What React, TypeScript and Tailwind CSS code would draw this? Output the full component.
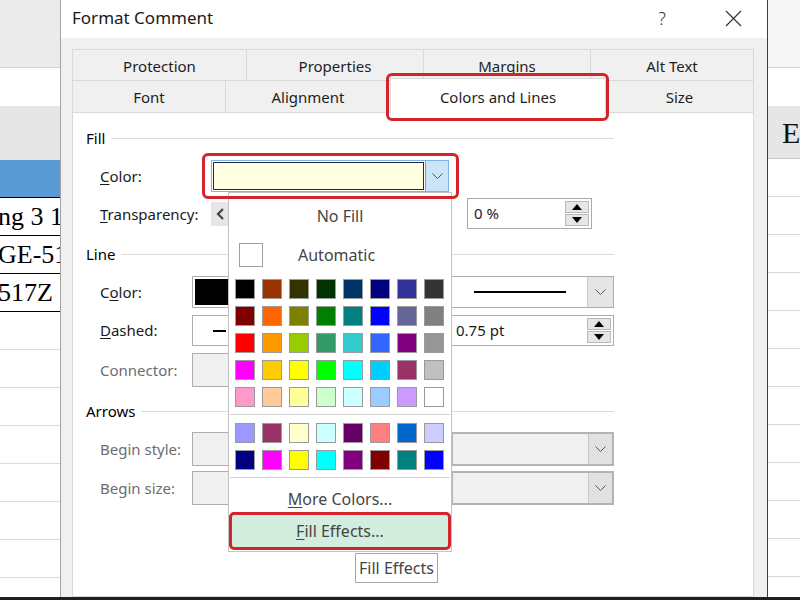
import React from "react";

const palette = [
  ["#000000", "#993300", "#333300", "#003300", "#003366", "#000080", "#333399", "#333333"],
  ["#800000", "#FF6600", "#808000", "#008000", "#008080", "#0000FF", "#666699", "#808080"],
  ["#FF0000", "#FF9900", "#99CC00", "#339966", "#33CCCC", "#3366FF", "#800080", "#969696"],
  ["#FF00FF", "#FFCC00", "#FFFF00", "#00FF00", "#00FFFF", "#00CCFF", "#993366", "#C0C0C0"],
  ["#FF99CC", "#FFCC99", "#FFFF99", "#CCFFCC", "#CCFFFF", "#99CCFF", "#CC99FF", "#FFFFFF"],
];

const chartColors = [
  ["#9999FF", "#993366", "#FFFFCC", "#CCFFFF", "#660066", "#FF8080", "#0066CC", "#CCCCFF"],
  ["#000080", "#FF00FF", "#FFFF00", "#00FFFF", "#800080", "#800000", "#008080", "#0000FF"],
];

function Chevron() {
  return (
    <svg width="11" height="6" viewBox="0 0 11 6">
      <path d="M0.5 0.5 L5.5 5.5 L10.5 0.5" fill="none" stroke="#555" strokeWidth="1" />
    </svg>
  );
}

function Spin() {
  return (
    <div className="flex flex-col w-[26px] h-full py-[2px] pr-[2px] gap-[1px]">
      <div className="flex-1 bg-[#e6e6e6] border border-[#b9b9b9] flex items-center justify-center">
        <svg width="10" height="6" viewBox="0 0 10 6">
          <path d="M0 6 L5 0 L10 6Z" fill="#000" />
        </svg>
      </div>
      <div className="flex-1 bg-[#e6e6e6] border border-[#b9b9b9] flex items-center justify-center">
        <svg width="10" height="6" viewBox="0 0 10 6">
          <path d="M0 0 L5 6 L10 0Z" fill="#000" />
        </svg>
      </div>
    </div>
  );
}

function SectionHeader({ title }: { title: string }) {
  return (
    <div className="flex items-center h-[20px] w-[528px]">
      <span className="text-[15px] text-black">{title}</span>
      <div className="ml-[6px] flex-1 h-px bg-[#dcdcdc]" />
    </div>
  );
}

function Swatches({ rows }: { rows: string[][] }) {
  return (
    <div className="grid grid-cols-[repeat(8,20px)] gap-[7px] pl-[6px]">
      {rows.flat().map((c, i) => (
        <div key={i} className="w-[20px] h-[20px] border border-[#9a9a9a]" style={{ backgroundColor: c }} />
      ))}
    </div>
  );
}

function ColorPopup() {
  return (
    <div className="absolute top-[32px] left-[17px] z-20 w-[224px] h-[360px] bg-white border border-[#c3c3c3] flex flex-col text-[#454545]">
      <div className="mt-[7px] h-[32px] flex items-center justify-center text-[16px]">No Fill</div>
      <div className="mt-[7px] h-[32px] flex items-center">
        <div className="ml-[10px] w-[24px] h-[24px] border border-[#a0a0a0] bg-white" />
        <span className="ml-[35px] text-[16px]">Automatic</span>
      </div>
      <div className="mt-[8px]">
        <Swatches rows={palette} />
      </div>
      <div className="mt-[7px] mx-[1px] h-px bg-[#d4d4d4]" />
      <div className="mt-[8px]">
        <Swatches rows={chartColors} />
      </div>
      <div className="mt-[7px] mx-[1px] h-px bg-[#d4d4d4]" />
      <div className="mt-[8px] h-[26px] flex items-center justify-center text-[16px]">
        <span>
          <span className="underline underline-offset-2">M</span>ore Colors...
        </span>
      </div>
      <div className="relative mt-[2px] mx-[2px] h-[34px] bg-[#d3eddf] border border-[#b7d6c5] flex items-center justify-center text-[16px]">
        <span>
          <span className="underline underline-offset-2">F</span>ill Effects...
        </span>
        <div className="absolute -inset-[3px] border-[3px] border-[#d3232b] rounded-[5px]" />
      </div>
      <div className="absolute left-[126px] top-[360px] w-[83px] h-[30px] bg-white border border-[#a7a7a7] flex items-center justify-center text-[16px] text-[#454545] whitespace-nowrap">
        Fill Effects
      </div>
    </div>
  );
}

function GrayBox() {
  return <div className="w-[240px] h-[34px] bg-[#f0f0f0] border border-[#adadad]" />;
}

function GrayDropdown() {
  return (
    <div className="w-[163px] h-[34px] bg-[#f0f0f0] border-2 border-[#b3b3b3] flex">
      <div className="flex-1" />
      <div className="w-[24px] bg-[#e1e1e1] border-l border-[#c8c8c8] flex items-center justify-center">
        <Chevron />
      </div>
    </div>
  );
}

function Tab({ label, w, selected = false, last = false }: { label: string; w: string; selected?: boolean; last?: boolean }) {
  return (
    <div
      className={`${w} relative flex items-center justify-center text-[15px] text-[#1e1e1e] border-t border-l border-[#d9d9d9] ${
        last ? "border-r" : ""
      } ${selected ? "bg-white -mt-[2px] -mb-px z-10" : "bg-[#f0f0f0]"}`}
    >
      <span className="pt-[2px]">{label}</span>
      {selected && <div className="absolute -left-[5px] -right-[4px] -top-[6px] -bottom-[8px] border-[3px] border-[#d3232b] rounded-[6px]" />}
    </div>
  );
}

export default function App() {
  return (
    <div className="w-[800px] h-[600px] overflow-hidden bg-white flex flex-col font-['Noto_Sans',sans-serif]">
      <div className="flex h-[597px] overflow-hidden">
        {/* sheet, left */}
        <div className="w-[60px] shrink-0 flex flex-col overflow-hidden">
          <div className="h-[68px] shrink-0 bg-[#ebebeb] border-b border-[#d2d2d2]" />
          <div className="h-[38px] shrink-0 bg-white" />
          <div className="h-[54px] shrink-0 bg-[#e6e6e6]" />
          <div className="h-[37px] shrink-0 bg-[#5b9bd5]" />
          <div className="border-t border-black">
            {["ng 3 1", "GE-51", "517Z"].map((t) => (
              <div
                key={t}
                className="h-[38px] border-b border-black flex items-center whitespace-nowrap font-['Liberation_Serif',serif] text-[26px] text-black -ml-[2px]"
              >
                {t}
              </div>
            ))}
          </div>
          {Array.from({ length: 8 }).map((_, i) => (
            <div key={i} className="h-[38px] shrink-0 border-b border-[#dcdcdc]" />
          ))}
        </div>

        {/* dialog */}
        <div className="w-[708px] shrink-0 flex flex-col border-l border-[#a3a3a3] border-r border-r-[#3d3d3d]">
          <div className="h-[38px] shrink-0 bg-white flex items-center pl-[11px]">
            <span className="text-[17px] text-[#1a1a1a] -mt-[2px]">Format Comment</span>
            <span className="ml-auto text-[18px] text-[#333] font-light -mt-[2px]">?</span>
            <svg width="17" height="17" viewBox="0 0 17 17" className="ml-[59px] mr-[25px] -mt-[2px]">
              <path d="M1 1 L16 16 M16 1 L1 16" stroke="#333" strokeWidth="1.2" />
            </svg>
          </div>

          <div className="flex-1 bg-[#f0f0f0] pt-[11px] pl-[11px] pr-[13px] flex flex-col">
            <div className="flex h-[31px]">
              <Tab label="Protection" w="w-[174px]" />
              <Tab label="Properties" w="w-[177px]" />
              <Tab label="Margins" w="w-[167px]" />
              <Tab label="Alt Text" w="w-[164px]" last />
            </div>
            <div className="flex h-[32px]">
              <Tab label="Font" w="w-[153px]" />
              <Tab label="Alignment" w="w-[165px]" />
              <Tab label="Colors and Lines" w="w-[215px]" selected />
              <Tab label="Size" w="w-[149px]" last />
            </div>

            <div className="flex-1 bg-white border border-[#d9d9d9] pl-[13px] pt-[15px] text-[15px] text-[#1a1a1a]">
              <SectionHeader title="Fill" />

              <div className="mt-[12px] h-[32px] flex items-center pl-[14px]">
                <span className="w-[111px]">
                  <span className="underline underline-offset-2">C</span>olor:
                </span>
                <div className="relative">
                  <div className="w-[238px] h-[32px] flex border border-[#7fb3e6]">
                    <div className="flex-1 m-[1px] border border-[#1d2b45] bg-[#ffffe1]" />
                    <div className="w-[23px] bg-[#cce4f7] border-l border-[#5aa0e0] flex items-center justify-center">
                      <Chevron />
                    </div>
                  </div>
                  <div className="absolute -left-[9px] -right-[10px] -top-[7px] -bottom-[7px] z-30 border-[3px] border-[#d3232b] rounded-[6px]" />
                  <ColorPopup />
                </div>
              </div>

              <div className="mt-[6px] h-[31px] flex items-center pl-[14px]">
                <span className="w-[111px] pt-[1px]">
                  <span className="underline underline-offset-2">T</span>ransparency:
                </span>
                <div className="w-[244px] h-[24px] flex">
                  <div className="w-[17px] bg-[#e6e6e6] flex items-center justify-center">
                    <svg width="8" height="12" viewBox="0 0 8 12">
                      <path d="M7 1 L2 6 L7 11" fill="none" stroke="#444" strokeWidth="2.2" />
                    </svg>
                  </div>
                </div>
                <div className="ml-[12px] w-[125px] h-[31px] bg-white border border-[#a9a9a9] flex items-center">
                  <span className="flex-1 pl-[6px]">0 %</span>
                  <Spin />
                </div>
              </div>

              <div className="mt-[15px]">
                <SectionHeader title="Line" />
              </div>

              <div className="mt-[12px] h-[32px] flex items-center pl-[14px]">
                <span className="w-[92px]">
                  C<span className="underline underline-offset-2">o</span>lor:
                </span>
                <div className="w-[259px]">
                  <div className="w-[240px] h-[32px] border border-[#adadad] bg-white p-[2px]">
                    <div className="w-full h-full bg-black" />
                  </div>
                </div>
                <div className="w-[163px] h-[32px] bg-white border border-[#adadad] flex">
                  <div className="flex-1 flex items-center pl-[22px] pr-[21px]">
                    <div className="w-full h-[1.5px] bg-black" />
                  </div>
                  <div className="w-[26px] bg-[#e5e5e5] border-l border-[#c9c9c9] flex items-center justify-center">
                    <Chevron />
                  </div>
                </div>
              </div>

              <div className="mt-[7px] h-[31px] flex items-center pl-[14px]">
                <span className="w-[92px]">
                  <span className="underline underline-offset-2">D</span>ashed:
                </span>
                <div className="w-[259px]">
                  <div className="w-[240px] h-[31px] border border-[#adadad] bg-white flex items-center pl-[20px]">
                    <div className="w-[13px] h-[2px] bg-black" />
                  </div>
                </div>
                <div className="w-[163px] h-[31px] bg-white border border-[#adadad] flex items-center">
                  <span className="flex-1 pl-[4px]">0.75 pt</span>
                  <Spin />
                </div>
              </div>

              <div className="mt-[7px] h-[34px] flex items-center pl-[14px] text-[#6d6d6d]">
                <span className="w-[92px]">Connector:</span>
                <GrayBox />
              </div>

              <div className="mt-[14px]">
                <SectionHeader title="Arrows" />
              </div>

              <div className="mt-[11px] h-[34px] flex items-center pl-[14px] text-[#6d6d6d]">
                <span className="w-[92px]">Begin style:</span>
                <div className="w-[259px]">
                  <GrayBox />
                </div>
                <GrayDropdown />
              </div>

              <div className="mt-[5px] h-[34px] flex items-center pl-[14px] text-[#6d6d6d]">
                <span className="w-[92px]">Begin size:</span>
                <div className="w-[259px]">
                  <GrayBox />
                </div>
                <GrayDropdown />
              </div>
            </div>
          </div>
        </div>

        {/* sheet, right */}
        <div className="flex-1 flex flex-col overflow-hidden">
          <div className="h-[68px] shrink-0 bg-[#f7f7f7] border-b border-[#d2d2d2]" />
          <div className="h-[38px] shrink-0 bg-white" />
          <div className="h-[53px] shrink-0 bg-[#e6e6e6] border-b border-[#c8c8c8] flex items-center pl-[14px] font-['Liberation_Serif',serif] text-[30px] text-[#111] whitespace-nowrap">
            E
          </div>
          {Array.from({ length: 12 }).map((_, i) => (
            <div key={i} className="h-[38px] shrink-0 border-b border-[#d6d6d6]" />
          ))}
        </div>
      </div>
      <div className="flex-1 bg-[#1e1e1e]" />
    </div>
  );
}
